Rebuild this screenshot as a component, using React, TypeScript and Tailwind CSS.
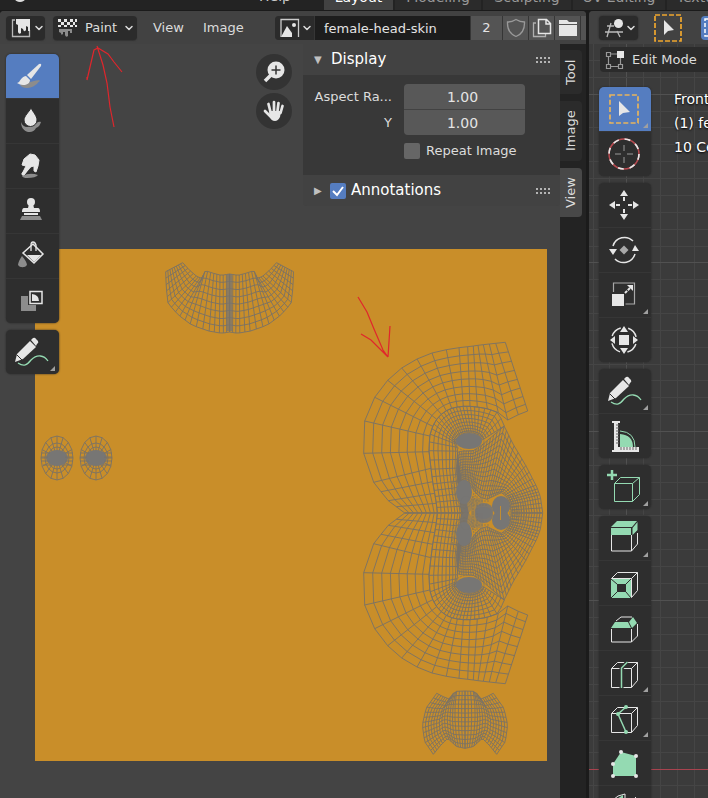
import React from "react";
import { ChevronDown } from "lucide-react";

type Pt = [number, number];

const lerp = (a: Pt, b: Pt, t: number): Pt => [a[0] + (b[0] - a[0]) * t, a[1] + (b[1] - a[1]) * t];

/** Evaluates a polyline at t in 0..1, every vertex being equally spaced in t. */
const at = (curve: Pt[], t: number): Pt => {
  const s = Math.min(Math.max(t, 0), 1) * (curve.length - 1);
  const i = Math.min(Math.floor(s), curve.length - 2);
  return lerp(curve[i], curve[i + 1], s - i);
};

const toPath = (pts: Pt[]) => "M" + pts.map(([x, y]) => `${x.toFixed(1)} ${y.toFixed(1)}`).join("L");

/** Grid between two curves that run side by side. */
const ruled = (a: Pt[], b: Pt[], cols: number, rows: number, ease = 1) => {
  let d = "";
  for (let c = 0; c <= cols; c++) d += toPath([at(a, c / cols), at(b, c / cols)]);
  for (let r = 0; r <= rows; r++) {
    const v = 1 - Math.pow(1 - r / rows, ease);
    const line: Pt[] = [];
    for (let c = 0; c <= cols; c++) line.push(lerp(at(a, c / cols), at(b, c / cols), v));
    d += toPath(line);
  }
  return d;
};

/** Grid that fills four joined curves. */
const coons = (top: Pt[], bottom: Pt[], left: Pt[], right: Pt[], cols: number, rows: number) => {
  const p = (u: number, v: number): Pt => {
    const t = at(top, u), b = at(bottom, u), l = at(left, v), r = at(right, v);
    const k = (n: 0 | 1) =>
      (1 - v) * t[n] + v * b[n] + (1 - u) * l[n] + u * r[n] -
      ((1 - u) * (1 - v) * top[0][n] + u * (1 - v) * top[top.length - 1][n] +
        (1 - u) * v * bottom[0][n] + u * v * bottom[bottom.length - 1][n]);
    return [k(0), k(1)];
  };
  let d = "";
  for (let c = 0; c <= cols; c++) d += toPath(Array.from({ length: rows + 1 }, (_, r) => p(c / cols, r / rows)));
  for (let r = 0; r <= rows; r++) d += toPath(Array.from({ length: cols + 1 }, (_, c) => p(c / cols, r / rows)));
  return d;
};

const third = (ox: number, oy: number, pts: Pt[]): Pt[] => pts.map(([x, y]) => [ox + x / 3, oy + y / 3]);

const headOuter = third(315, 81, [
  [163, 548], [139, 530], [115, 512], [93, 485], [71, 457], [41, 370], [44, 273], [74, 202], [113, 151], [155, 114],
  [201, 87], [246, 69], [289, 59], [327, 53], [353, 50], [370, 48], [384, 46], [400, 44], [418, 42], [437, 40], [466, 37],
]);
const headRing = third(315, 81, [
  [262, 548], [259, 520], [254, 490], [248, 455], [243, 415], [237, 365], [239, 318], [248, 289], [260, 268], [274, 253],
  [289, 242], [305, 235], [322, 231], [340, 229], [360, 229], [382, 231], [412, 236], [445, 248], [473, 270], [505, 254], [533, 243],
]);
const earRing: Pt[] = [...headRing.slice(0, 18), ...third(315, 81, [[463, 288]])];
const headEar = third(315, 81, [
  [335, 548], [331, 514], [327, 480], [323, 447], [320, 412], [323, 365],
  ...Array.from({ length: 13 }, (_, i): Pt => {
    const a = ((160 + i * 15.8) * Math.PI) / 180;
    return [358 + 40 * Math.cos(a), 335 + 27 * Math.sin(a)];
  }),
]);
const faceOuter = third(315, 81, [
  [335, 548], [327, 485], [320, 425], [323, 365], [345, 363], [370, 362], [396, 345], [428, 318], [463, 288],
  [486, 337], [526, 404], [560, 470], [571, 500], [578, 548],
]);
const faceInner = third(315, 81, [
  [355, 548], [348, 515], [338, 485], [334, 462], [344, 456], [358, 462], [372, 482], [390, 502], [412, 508],
  [432, 498], [454, 488], [470, 500], [480, 520], [484, 548],
]);

const headMesh =
  ruled(headOuter, headRing, 20, 8, 1.12) +
  ruled(earRing, headEar, 32, 8, 1.3) +
  ruled(faceOuter, faceInner, 44, 13, 1.15);

const scalpMesh = ruled(
  third(115, 1, [[47, 65], [49, 115], [54, 160], [85, 195], [125, 225], [175, 243], [215, 250], [239, 246]]),
  third(115, 1, [[98, 38], [118, 60], [140, 79], [155, 85], [166, 62], [190, 70], [214, 76], [239, 72]]),
  18, 8,
);

const mouthMesh = coons(
  third(315, 251, [[260, 580], [280, 590], [297, 597], [310, 580], [320, 574], [345, 573]]),
  third(315, 251, [[250, 763], [270, 738], [293, 715], [320, 740], [345, 745]]),
  third(315, 251, [[260, 580], [228, 625], [217, 675], [224, 725], [250, 763]]),
  third(315, 251, [[345, 573], [345, 745]]),
  15, 13,
);

const eyeMesh = (() => {
  let d = "";
  for (let i = 0; i < 16; i++) {
    const a = (i * Math.PI) / 8;
    d += toPath([[0, 0], [16 * Math.cos(a), 22 * Math.sin(a)]]);
  }
  for (const [rx, ry] of [[16, 22], [12, 15], [9, 11]])
    d += toPath(Array.from({ length: 17 }, (_, i): Pt => [rx * Math.cos((i * Math.PI) / 8), ry * Math.sin((i * Math.PI) / 8)]));
  return d;
})();

function HalfHead() {
  return (
    <g>
      <path d={headMesh} />
      <g fill="#777674" stroke="none">
        <ellipse cx="434" cy="192" rx="13" ry="8" />
        <ellipse cx="429" cy="243" rx="8" ry="12" />
        <ellipse cx="431" cy="256" rx="6" ry="9" opacity=".5" />
        <ellipse cx="449" cy="262" rx="9" ry="8" opacity=".9" />
        <ellipse cx="466" cy="257" rx="9" ry="10" />
        <rect x="436" y="249" width="12" height="15" opacity=".4" />
      </g>
      <g strokeWidth=".7" strokeDasharray="2 1">
        <ellipse cx="434" cy="192" rx="15" ry="10" />
        <ellipse cx="429" cy="241" rx="10" ry="15" />
        <ellipse cx="429" cy="240" rx="12" ry="19" />
        <path d="M438 247v17M442 247v17M475 247v17M478 245v19M482 247v17M476 262h16M476 258h16M476 254h14M440 252h14M438 256h14" />
      </g>
    </g>
  );
}

/** The texture with the unwrapped meshes drawn over it. */
function UvImage() {
  return (
    <svg viewBox="0 0 512 512" className="block size-[512px] bg-[#c98e29]" fill="none" stroke="#787266" strokeWidth=".9" aria-label="UV layout">
      <path d={scalpMesh} />
      <path d={scalpMesh} transform="translate(389.2 0) scale(-1 1)" />
      <path d="M193 25v57M196 25v57" stroke="#777674" strokeWidth="1.5" />
      {[22, 61].map((x) => (
        <g key={x} transform={`translate(${x} 209)`}>
          <path d={eyeMesh} />
          <ellipse rx="11" ry="8" fill="#777674" stroke="none" />
          <path d="M-16-5h9M-16-1h7M-16 3h9M-14 7h8M8-5h8M8-1h8M8 3h8M6 7h9" />
        </g>
      ))}
      <path d={mouthMesh} />
      <path d={mouthMesh} transform="translate(860 0) scale(-1 1)" />
      <HalfHead />
      <g transform="translate(0 528) scale(1 -1)">
        <HalfHead />
      </g>
      <path d="M465.500 257v14" stroke="#c98e29" />
    </svg>
  );
}

const W = "#e6e6e6";
const G = "#8c8c8c";
const GREEN = "#94dab2";

function ToolIcon({ children }: { children: React.ReactNode }) {
  return (
    <svg viewBox="0 0 52 44" className="h-[44px] w-[52px]" fill="none">
      {children}
    </svg>
  );
}

const Pencil = () => (
  <>
    <path d="M9 32l2-8 13-13 6 6-13 12z" fill={W} />
    <path d="M25 10l2-2q2-1 3 1l2 2q1 2-1 3l-1 2z" fill={W} />
    <path d="M11 25l5 5" stroke="#2e2e2e" />
    <path d="M12 33c6 4 9 2 13-3 6-6 13-5 17 1" stroke={GREEN} strokeWidth="1.300" />
  </>
);
const Cube = ({ color = W }: { color?: string }) => (
  <path d="M12.500 17.500h20v19h-20zM12.500 17.500l6-6h20l-6 6M38.500 11.500v18l-6 7" stroke={color} />
);

const paintTools: [string, React.ReactNode][] = [
  ["Draw", <>
    <path d="M14 31c5-3 9-2 14-4 3-1 6-1 6 0-2 1-3 4-8 6-5 2-10 1-12-2z" fill={G} />
    <path d="M33 10q3-1 2 2L25 25l-4-4z" fill={W} />
    <path d="M20 22l4 4c0 3-3 5-7 5-2 0-4-1-6-2 4-1 3-6 9-7z" fill={W} />
  </>],
  ["Soften", <>
    <path d="M15 23c2 6 7 6 13 3 3-2 4-4 7-3-1 3-2 5-5 6-3 7-15 5-15-6z" fill={G} />
    <path d="M25 9c2 4 6 8 6 12a6 6 0 01-13 0c0-4 5-8 7-12z" fill={W} stroke="#2e2e2e" />
  </>],
  ["Smear", <>
    <path d="M16 32q8-4 16-1-2 3-11 3-4 0-5-2z" fill={G} />
    <path d="M18 15l6-5 5 1 4 5-1 6-2 6-2-1 0-5-4 1-6 8-2-1 4-8-4-1z" fill={W} stroke={W} strokeLinejoin="round" />
    <path d="M24 22l-7 8" stroke={W} strokeWidth="3" strokeLinecap="round" />
  </>],
  ["Clone", <>
    <circle cx="25" cy="13" r="4" fill={W} />
    <path d="M23 15h4l1 4h4q2 0 2 4H16q0-4 2-4h4zM18 24h14v2H18z" fill={W} />
    <path d="M16 27h18l2 4H14z" fill={G} />
  </>],
  ["Fill", <>
    <path d="M16 22q5 6 5 9a5 4 0 01-9 0q0-3 4-9z" fill={G} />
    <path d="M27 10l10 10-9 9-11-10z" stroke={W} strokeWidth="1.500" />
    <path d="M21 21h14l-7 7z" fill={W} />
    <path d="M25 17v-6q0-3 2-3t3 3v6" stroke={W} strokeWidth="1.300" />
  </>],
  ["Mask", <>
    <path d="M15 17h7v9h8v6H15z" fill={G} />
    <path d="M24 12.500h12v12H24z" stroke={W} strokeWidth="1.500" />
    <path d="M26 15q7 1 7 7h-7z" fill={W} />
  </>],
];

const annotate: [string, React.ReactNode] = ["Annotate", <Pencil />];

const editTools: [string, React.ReactNode, boolean?][][] = [
  [
    ["Select Box", <>
      <path d="M11 8h28v28H11z" stroke="#e8b45c" strokeWidth="1.700" strokeDasharray="5 2.300" />
      <path d="M20 14v15l4-3 7-1z" fill={W} />
    </>, true],
    ["Cursor", <>
      <circle cx="25" cy="22" r="15" stroke="#b84a50" strokeWidth="1.500" />
      <circle cx="25" cy="22" r="15" stroke={W} strokeWidth="1.700" strokeDasharray="5.900 5.900" />
      <path d="M25 13v6M25 25v6M16 22h6M28 22h6" stroke="#999" />
    </>],
  ],
  [
    ["Move", <>
      <path d="M25 7l4 6h-8zM25 37l4-6h-8zM10 22l6-4v8zM40 22l-6-4v8z" fill={W} />
      <path d="M25 14v4M25 26v4M17 22h4M29 22h4" stroke={W} strokeWidth="2" />
    </>],
    ["Rotate", <>
      <path d="M14 18a12 12 0 0120-5M36 26a12 12 0 01-20 5" stroke={W} strokeWidth="1.500" />
      <path d="M10 21h8l-4 6zM33 23h7l-4-6z" fill={W} />
      <path d="M25 17.500l4.500 4.500-4.500 4.500-4.500-4.500z" fill="#a8a8a8" />
    </>],
    ["Scale", <>
      <path d="M14.500 19v-9h21v21h-9" stroke="#a8a8a8" strokeWidth="1.200" />
      <path d="M13 21h12v12H13z" fill={W} />
      <path d="M26 20l5-5" stroke={W} strokeWidth="2" strokeDasharray="3 1" />
      <path d="M28 12h6v6z" fill={W} />
    </>, true],
    ["Transform", <>
      <circle cx="25" cy="22" r="12.500" stroke={W} strokeWidth="1.500" strokeDasharray="12 7.600" strokeDashoffset="-4" />
      <path d="M25 8l4 6h-8zM25 36l4-6h-8zM11 22l5-4v8zM39 22l-5-4v8zM20 17h10v10H20z" fill={W} />
    </>],
  ],
  [
    [annotate[0], annotate[1], true],
    ["Measure", <>
      <path d="M21 33V20q13 1 13 13z" fill={GREEN} />
      <path d="M21 17q15 1 15 16" stroke={GREEN} />
      <path d="M13 7h8v2h-2v24h21v5H13v-2h2V9h-2z" fill={W} />
      <path d="M17 11h3M17 14h3M17 17h3M17 20h3M17 23h3M17 26h3M17 29h3M22 33v3M25 33v3M28 33v3M31 33v3M34 33v3M37 33v3" stroke="#666" />
    </>],
  ],
  [["Add Cube", <>
    <path d="M13 5v10M8 10h10" stroke={GREEN} strokeWidth="2.500" />
    <path d="M15.500 18.500h18v18h-18zM15.500 18.500l6-6h19l-7 6M40.500 12.500v17l-7 7" stroke={GREEN} />
  </>, true]],
  [
    ["Extrude Region", <>
      <path d="M12.500 19v16h20V19M38.500 17v11l-6 7" stroke={W} />
      <path d="M12 11l6-6h20l-5 6z" fill={GREEN} />
      <path d="M12 12h20v7H12zM33.500 12l5-6v8l-5 5z" fill={GREEN} />
    </>, true],
    ["Inset Faces", <>
      <Cube />
      <path d="M12 18h20v19H12z" fill={GREEN} />
      <path d="M18 23h9v8h-9z" fill="#2e2e2e" />
      <path d="M12 18l6 5M32 18l-5 5M12 37l6-6M32 37l-5-6" stroke="#2e2e2e" />
    </>],
    ["Bevel", <>
      <path d="M12.500 23v13h20V23M38.500 18v12l-6 6M17 15l5-4h11" stroke={W} />
      <path d="M12 22l4-6h13l3 6zM30 16l4-5 4 6-5 5z" fill={GREEN} />
    </>],
    ["Loop Cut", <>
      <Cube />
      <path d="M22.500 37V17l6-6" stroke="#2e2e2e" strokeWidth="4" />
      <path d="M22.500 37V17l6-6" stroke={GREEN} strokeWidth="1.500" />
    </>, true],
    ["Knife", <>
      <Cube />
      <path d="M27 11l-8 7 8 18" stroke={GREEN} strokeWidth="1.500" />
      <g fill={GREEN}><circle cx="27" cy="11" r="2" /><circle cx="19" cy="18" r="2" /><circle cx="27" cy="36" r="2" /></g>
    </>, true],
    ["Poly Build", <>
      <path d="M14 23l8-12 15 4v20H14z" fill={GREEN} />
      <g fill={W}>
        <circle cx="14" cy="23" r="2" /><circle cx="22" cy="11" r="2" /><circle cx="37" cy="15" r="2" />
        <circle cx="37" cy="35" r="2" /><circle cx="14" cy="35" r="2" />
      </g>
    </>],
    ["Spin", <>
      <path d="M14 14q4-5 12-6v12l-7 3z" stroke={W} />
      <path d="M18 13l6-4v9z" fill={GREEN} />
      <path d="M36 11q3 2 4 6" stroke={W} />
    </>],
  ],
];

function ToolGroup({ tools, active, square }: { tools: [string, React.ReactNode, boolean?][]; active?: boolean; square?: boolean }) {
  return (
    <div className="flex shrink-0 flex-col gap-px overflow-hidden rounded-[5px] bg-[#363636] shadow-[0_0_2px_#222]">
      {tools.map(([name, icon, more], i) => (
        <button
          key={name}
          aria-label={name}
          className={"flex h-[44px] shrink-0 justify-start " + (square ? "w-[52px] " : "w-[53px] ") + (active && i === 0 ? "bg-[#557dc0]" : "bg-[#2e2e2e]")}
        >
          <ToolIcon>
            {icon}
            {more && <path d="M49 36v5h-5z" fill="#a0a0a0" />}
          </ToolIcon>
        </button>
      ))}
    </div>
  );
}

const Chevron = ({ className = "" }: { className?: string }) => (
  <ChevronDown className={"size-[12px] shrink-0 text-[#dcdcdc] " + className} strokeWidth={3} aria-hidden />
);

const Grip = () => (
  <svg viewBox="0 0 16 8" className="h-[8px] w-[16px]" fill="#b4b4b4" aria-hidden>
    {[0, 4, 8, 12].map((x) => [1, 5].map((y) => <rect key={x + "-" + y} x={x} y={y} width="2" height="2" />))}
  </svg>
);

function TopBar() {
  const tab = "flex h-[26px] shrink-0 items-center justify-center rounded-t-[4px] text-[14px] ";
  return (
    <header className="flex h-[11px] shrink-0 items-end overflow-hidden border-b border-[#1b1b1b] bg-[#232323] pl-[15px]">
      <svg viewBox="0 0 20 20" className="mb-[7px] size-[20px] shrink-0" fill="#ddd" aria-hidden>
        <ellipse cx="5" cy="16" rx="5" ry="3" />
      </svg>
      <div className="flex h-[28px] w-[289px] shrink-0 items-center justify-end pr-[33px] text-[14px] text-[#ccc]">Help</div>
      <nav className="flex gap-[2px]" aria-label="Workspaces">
        <button className={tab + "w-[69px] bg-[#424242] text-white"}>Layout</button>
        <button className={tab + "w-[86px] bg-[#2b2b2b] text-[#999]"}>Modeling</button>
        <button className={tab + "w-[88px] bg-[#2b2b2b] text-[#999]"}>Sculpting</button>
        <button className={tab + "w-[92px] bg-[#2b2b2b] text-[#999]"}>UV Editing</button>
        <button className={tab + "w-[110px] bg-[#2b2b2b] text-[#999]"}>Texture Paint</button>
      </nav>
    </header>
  );
}

function ImageHeader() {
  const cell = "flex h-[24px] w-[25px] shrink-0 items-center justify-center bg-[#545454]";
  return (
    <div className="flex h-[33px] items-center overflow-hidden bg-[#424242] pt-px pl-[6px]">
      <button aria-label="Editor type" className="flex h-[24px] w-[39px] shrink-0 items-center gap-[2px] rounded-[4px] bg-[#2b2b2b] pl-[5px] shadow-[0_1px_1px_#333]">
        <svg viewBox="0 0 20 20" className="size-[20px] shrink-0" fill="none">
          <path d="M4 2H1.500v16.500h17V12" stroke="#b8b8b8" strokeWidth="1.300" />
          <path d="M5 1h14v12h-2V9l-2-1v4q-2 3-3-1l-2-1v5q-2 2-3-1V7L5 6z" fill={W} />
        </svg>
        <Chevron />
      </button>
      <label className="relative ml-[8px] flex h-[24px] w-[84px] shrink-0 items-center rounded-[4px] bg-[#2b2b2b] shadow-[0_1px_1px_#333]">
        <svg viewBox="0 0 20 20" className="ml-[5px] size-[20px]">
          <path fill={W} d="M0 1h3v3H0zM6 1h3v3H6zM12 1h3v3h-3zM17 1h2v3h-2zM3 4h3v3H3zM9 4h3v3H9zM15 4h2v3h-2zM0 7h3v2H0zM6 7h3v2H6zM12 7h3v2h-3zM17 7h2v2h-2z" />
          <path fill={G} d="M1 11h13v4h-2v-2h-2v5q-2 2-3-1v-3H5v2q-2 2-2-1L1 14z" />
        </svg>
        <span className="sr-only">Mode</span>
        <select className="absolute inset-0 appearance-none bg-transparent pl-[32px] text-[13px] text-[#dcdcdc]">
          <option>Paint</option>
        </select>
        <Chevron className="absolute right-[2px]" />
      </label>
      <button className="ml-[16px] w-[31px] shrink-0 text-left text-[13px] text-[#dcdcdc]">View</button>
      <button className="ml-[19px] w-[42px] shrink-0 text-left text-[13px] text-[#dcdcdc]">Image</button>
      <div className="ml-[30px] flex shrink-0 gap-px overflow-hidden rounded-l-[4px] bg-[#363636]">
        <button aria-label="Browse image" className="flex h-[24px] w-[39px] items-center gap-[1px] bg-[#2b2b2b] pl-[5px]">
          <svg viewBox="0 0 20 20" className="size-[20px] shrink-0" fill="none">
            <path d="M1 19V1.500h17.500V19" stroke="#ccc" strokeWidth="1.300" />
            <path d="M1 19l6-11 5 7v4z" fill={W} /><circle cx="14" cy="7" r="2" fill={W} />
          </svg>
          <Chevron />
        </button>
        <input aria-label="Image name" defaultValue="female-head-skin" className="h-[24px] w-[155px] bg-[#1d1d1d] pl-[9px] text-[13px] text-[#e4e4e4]" />
        <button aria-label="Users" className="h-[24px] w-[31px] bg-[#545454] text-[13px] text-[#e4e4e4]">2</button>
        <button aria-label="Fake user" className={cell}>
          <svg viewBox="0 0 20 20" className="size-[20px]" fill="none" stroke="#999" strokeWidth="1.300">
            <path d="M10 1.500Q6 4 1.500 4 1 15 10 18.500 19 15 18.500 4 14 4 10 1.500z" />
          </svg>
        </button>
        <button aria-label="New image" className={cell}>
          <svg viewBox="0 0 20 20" className="size-[20px]" fill="none">
            <path d="M4 5H1.500v13.500h12V16" stroke="#b0b0b0" strokeWidth="1.300" />
            <path d="M6.500 1.500h8l4 4v10h-12zM14 2v4h4" stroke={W} strokeWidth="1.500" />
          </svg>
        </button>
        <button aria-label="Open image" className={cell}>
          <svg viewBox="0 0 20 20" className="size-[20px]" fill={W}>
            <path d="M1 2h8l2 2h8v2H1zM1 7h18v11H1z" />
          </svg>
        </button>
        <span className="h-[24px] w-[25px] bg-[#545454]" />
      </div>
    </div>
  );
}

function Sidebar() {
  const field = "h-[25px] w-[121px] bg-[#585858] pr-[4px] text-center text-[14px] text-[#e4e4e4]";
  return (
    <aside className="flex">
      <div className="w-[257px] self-start text-[13px] text-[#dcdcdc]">
        <button className="flex h-[31px] w-full items-center bg-[#424242] pr-[8px] pl-[11px] text-[15px] text-white">
          <span className="w-[17px] text-left text-[10px] text-[#c0c0c0]">▼</span>
          <span className="flex-1 text-left">Display</span>
          <Grip />
        </button>
        <div className="flex h-[100px] flex-col bg-[#383838] pt-[9px]">
          <div className="flex">
            <div className="flex w-[89px] flex-col items-end whitespace-nowrap">
              <label htmlFor="aspect-x" className="h-[26px] leading-[26px]">Aspect Ra...</label>
              <label htmlFor="aspect-y" className="h-[25px] leading-[25px]">Y</label>
            </div>
            <div className="ml-[12px] flex flex-col gap-px overflow-hidden rounded-[4px] bg-[#424242]">
              <input id="aspect-x" defaultValue="1.00" className={field} />
              <input id="aspect-y" defaultValue="1.00" className={field} />
            </div>
          </div>
          <label className="mt-[6px] ml-[101px] flex items-center gap-[6px] leading-[20px]">
            <input type="checkbox" className="size-[16px] appearance-none rounded-[2px] bg-[#666]" />
            Repeat Image
          </label>
        </div>
        <div className="flex h-[31px] items-center rounded-b-[4px] bg-[#424242] pr-[8px] pl-[11px] text-[15px] text-white">
          <button aria-label="Expand" className="w-[16px] text-left text-[10px] text-[#c0c0c0]">▶</button>
          <label className="flex flex-1 items-center gap-[5px]">
            <span className="relative flex size-[16px]">
              <input type="checkbox" defaultChecked className="size-[16px] appearance-none rounded-[2px] bg-[#557dc0]" />
              <svg viewBox="0 0 16 16" className="pointer-events-none absolute inset-0" fill="none" stroke="#fff" strokeWidth="2">
                <path d="M3 8l4 4 6-8" />
              </svg>
            </span>
            Annotations
          </label>
          <Grip />
        </div>
      </div>
    </aside>
  );
}

function SideTabs() {
  const tab = "flex w-[22px] rotate-180 items-center justify-center rounded-l-[4px] text-[13px] text-[#dcdcdc] [writing-mode:vertical-rl] ";
  return (
    <div className="flex w-[26px] shrink-0 flex-col items-start gap-[7px] bg-[#232323] pt-[6px]">
      <button className={tab + "h-[44px] bg-[#2b2b2b]"}>Tool</button>
      <button className={tab + "h-[60px] bg-[#2b2b2b]"}>Image</button>
      <button className={tab + "h-[49px] bg-[#484848]"}>View</button>
    </div>
  );
}

function ImageEditor() {
  return (
    <section className="relative flex min-w-0 flex-col overflow-hidden rounded-t-[4px] bg-[#444]">
      <ImageHeader />
      <div className="flex min-h-0 flex-1">
        <div className="relative flex min-w-0 flex-1 justify-between">
          <div className="absolute top-[205px] left-[35px]">
            <UvImage />
          </div>
          <div className="relative flex flex-col gap-[7px] pt-[10px] pl-[6px]">
            <ToolGroup tools={paintTools} active />
            <ToolGroup tools={[[annotate[0], annotate[1], true]]} />
          </div>
          <div className="relative flex">
            <div className="mr-[11px] flex flex-col gap-[3px] pt-[10px]">
              <button aria-label="Zoom" className="flex size-[36px] items-center justify-center rounded-full bg-[#333]">
                <svg viewBox="0 0 24 24" className="size-[24px]">
                  <circle cx="14" cy="10" r="8.500" fill={W} />
                  <path d="M9 15l-6 6" stroke={W} strokeWidth="3.500" />
                  <path d="M14 5.500v9M9.500 10h9" stroke="#333" strokeWidth="1.500" />
                </svg>
              </button>
              <button aria-label="Pan" className="flex size-[36px] items-center justify-center rounded-full bg-[#333]">
                <svg viewBox="0 0 24 24" className="size-[24px]" fill="none" stroke={W} strokeLinecap="round">
                  <path d="M8.500 13L6.500 5M12 12V3M15.500 12l1-8M18.500 14l2-7M8 17l-5-5" strokeWidth="2.700" />
                  <path d="M7.500 12h11.500l-1 6q-2 4-5 4-4 0-6-5z" fill={W} stroke="none" />
                </svg>
              </button>
            </div>
            <Sidebar />
          </div>
        </div>
        <SideTabs />
      </div>
      <svg className="pointer-events-none absolute top-0 left-0 h-[360px] w-[440px]" viewBox="0 11 440 360" fill="none" stroke="#e0262c" strokeWidth="1.200" aria-hidden>
        <path d="M114 127l-4-20-3-24-4-18-6-19M87 80l3-13 4-17 4-2 10 6 6 8 8 10M87 77v3" />
        <path d="M358 297l9 15 7 17 9 21 5 7M361 334l10 6 17 17M390 326l-2 31" />
      </svg>
    </section>
  );
}

function Viewport() {
  const step = 16.87;
  return (
    <section className="relative flex min-w-0 flex-col overflow-hidden rounded-tl-[4px] bg-[#3b3b3b]">
      <svg className="absolute inset-0 h-full w-full" aria-hidden>
        {Array.from({ length: 40 }, (_, i) => (
          <line key={i} y1="0" y2="100%" x1={Math.round(3.500 + i * step) + 0.5} x2={Math.round(3.500 + i * step) + 0.5} stroke={i % 10 === 2 ? "#515151" : "#454545"} />
        ))}
        {Array.from({ length: 48 }, (_, i) => (
          <line key={i} x1="0" x2="100%" y1={Math.round(82.700 - 2 * step + i * step) + 0.5} y2={Math.round(82.700 - 2 * step + i * step) + 0.5}
            stroke={i === 42 ? "#a8434f" : i % 10 === 2 ? "#515151" : "#454545"} />
        ))}
      </svg>
      <div className="relative flex h-[33px] shrink-0 items-center overflow-hidden bg-[#424242] pt-px pl-[10px]">
        <button aria-label="Editor type" className="flex h-[24px] w-[39px] shrink-0 items-center gap-px rounded-[4px] bg-[#2b2b2b] pl-[5px] shadow-[0_0_2px_#222]">
          <svg viewBox="0 0 20 20" className="size-[20px] shrink-0" fill="none" stroke="#bbb" strokeWidth="1.300">
            <path d="M1 14h18M3 8h7M7 5L3 19M13 13l3 6" />
            <circle cx="14.500" cy="5.500" r="4.500" fill={W} stroke="none" />
          </svg>
          <Chevron />
        </button>
        <button aria-label="Select box" className="ml-[16px] shrink-0">
          <svg viewBox="0 0 28 28" className="size-[28px]" fill="none">
            <path d="M1 1h26v26H1z" stroke="#f0a72e" strokeWidth="1.700" strokeDasharray="5 2" />
            <path d="M10 6v15l4-4 6-1z" fill={W} />
          </svg>
        </button>
        <button aria-label="Set selection" className="ml-[19px] h-[24px] w-[39px] shrink-0 rounded-[4px] bg-[#557dc0]">
          <svg viewBox="0 0 20 20" className="ml-[3px] size-[20px]" fill="none" stroke="#fff" strokeWidth="1.500">
            <path d="M1 1h17v17H1z" strokeDasharray="4 2" />
          </svg>
        </button>
      </div>
      <label className="relative mt-[3px] ml-[11px] flex h-[25px] w-[130px] shrink-0 items-center rounded-[4px] bg-[#2b2b2b] pl-[5px]">
        <svg viewBox="0 0 20 20" className="size-[20px]" fill="none" stroke="#999" strokeWidth="1.200">
          <path d="M1.500 2.500h4v4h-4zM1.500 14.500h4v4h-4zM13.500 14.500h4v4h-4zM3.500 7v7M6 16.500h7M15.500 8v6M6 4h6" />
          <path d="M12 1h7v7h-7z" fill={W} stroke="none" />
        </svg>
        <span className="sr-only">Mode</span>
        <select className="absolute inset-0 appearance-none bg-transparent pl-[32px] text-[13px] text-[#dcdcdc]">
          <option>Edit Mode</option>
        </select>
      </label>
      <div className="relative mt-[15px] flex min-h-0 gap-[23px] pl-[10px]">
        <div className="flex shrink-0 flex-col gap-[7px]">
          {editTools.map((tools, i) => (
            <ToolGroup key={i} tools={tools} active={i === 0} square />
          ))}
        </div>
        <div className="text-[14px] leading-[24px] whitespace-nowrap text-white [text-shadow:0_1px_2px_#000]">
          <p>Front Orthographic</p>
          <p>(1) female-head</p>
          <p>10 Centimeters</p>
        </div>
      </div>
    </section>
  );
}

export default function App() {
  return (
    <div className="flex h-screen flex-col overflow-hidden bg-[#1b1b1b] font-['DejaVu_Sans',sans-serif]">
      <TopBar />
      <main className="grid min-h-0 flex-1 grid-cols-[minmax(0,586fr)_minmax(0,119fr)] grid-rows-[minmax(0,1fr)] gap-[3px]">
        <ImageEditor />
        <Viewport />
      </main>
    </div>
  );
}
